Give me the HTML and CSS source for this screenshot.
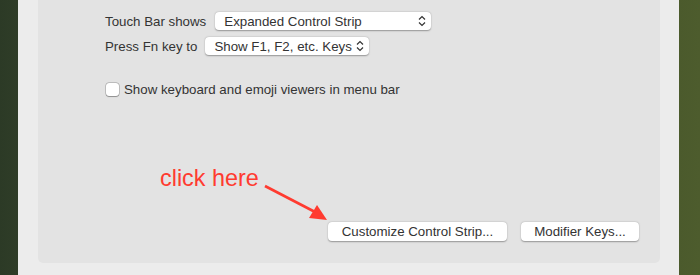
FILE: index.html
```html
<!DOCTYPE html>
<html lang="en">
    <head>
        <meta charset="UTF-8" />
        <title>Keyboard</title>
        <link rel="stylesheet" href="styles.css">
    </head>
    <body>
        <div class="desktop">
            <div class="window">
                <div class="panel">
                    <div class="row">
                        <span class="label">Touch Bar shows</span>
                        <span class="popup popup-wide">Expanded Control Strip
                            <svg class="stepper" width="8" height="12" viewBox="0 0 8 12"><path d="M1 4.5 L4 1.5 L7 4.5 M1 7.5 L4 10.5 L7 7.5" fill="none" stroke="#333" stroke-width="1.2" /></svg>
                        </span>
                    </div>
                    <div class="row">
                        <span class="label">Press Fn key to</span>
                        <span class="popup popup-short">Show F1, F2, etc. Keys
                            <svg class="stepper" width="8" height="12" viewBox="0 0 8 12"><path d="M1 4.5 L4 1.5 L7 4.5 M1 7.5 L4 10.5 L7 7.5" fill="none" stroke="#333" stroke-width="1.2" /></svg>
                        </span>
                    </div>
                    <label class="check-row">
                        <span class="checkbox"></span>
                        Show keyboard and emoji viewers in menu bar
                    </label>
                    <div class="buttons">
                        <button class="mac-button btn-customize">Customize Control Strip...</button>
                        <button class="mac-button btn-modifier">Modifier Keys...</button>
                    </div>
                    <div class="annotation">click here</div>
                    <svg class="arrow" width="80" height="50" viewBox="0 0 80 50">
                        <line x1="2" y1="2" x2="54" y2="29" stroke="#ff3b30" stroke-width="2.6" />
                        <polygon points="64,36 46,34 54,21" fill="#ff3b30" />
                    </svg>
                </div>
            </div>
        </div>
    </body>
</html>
```
FILE: styles.css
```css
* {
    box-sizing: border-box;
}
body {
    margin: 0;
    background: linear-gradient(90deg, #2c3a26 0, #2f3d28 18px, #4b5a2c 679px, #4d5c2d 100%);
    font-family: "Liberation Sans", Arial, Helvetica, sans-serif;
    color: #333;
}
.desktop {
    height: 275px;
    padding-left: 18px;
    overflow: hidden;
}
.window {
    width: 661px;
    height: 275px;
    background-color: #ececec;
    padding: 0 19px 12px 20px;
}
.panel {
    position: relative;
    height: 263px;
    background-color: #e3e3e3;
    border-radius: 0 0 5px 5px;
    padding: 12px 0 0 67px;
    font-size: 13.3px;
}
.row {
    display: flex;
    align-items: center;
    height: 18px;
    margin-bottom: 7px;
}
.label {
    margin-right: 9px;
}
.popup {
    position: relative;
    display: inline-flex;
    align-items: center;
    height: 18px;
    padding-left: 9px;
    background-color: #fff;
    border-radius: 4px;
    box-shadow: 0 0.5px 1.5px rgba(0, 0, 0, 0.35);
}
.popup-wide {
    width: 216px;
}
.popup-short {
    width: 164px;
    margin-left: -1px;
}
.stepper {
    position: absolute;
    right: 5px;
    top: 3px;
}
.check-row {
    display: flex;
    align-items: center;
    margin-top: 27px;
    margin-left: 1px;
}
.checkbox {
    width: 13px;
    height: 13px;
    margin-right: 5px;
    background-color: #fff;
    border-radius: 3px;
    box-shadow: 0 0 0 0.5px rgba(0, 0, 0, 0.3), 0 0.5px 1px rgba(0, 0, 0, 0.25);
}
.buttons {
    display: flex;
    gap: 14px;
    margin-top: 125px;
    margin-left: 223px;
}
.mac-button {
    height: 19px;
    padding: 0;
    border: 0;
    background-color: #fff;
    border-radius: 4px;
    box-shadow: 0 0.5px 1.5px rgba(0, 0, 0, 0.35);
    font-family: "Liberation Sans", Arial, Helvetica, sans-serif;
    font-size: 13.3px;
    color: #333;
}
.btn-customize {
    width: 179px;
}
.btn-modifier {
    width: 118px;
}
.annotation {
    position: absolute;
    left: 122px;
    top: 165px;
    font-size: 23.4px;
    color: #ff3b30;
}
.arrow {
    position: absolute;
    left: 225px;
    top: 184px;
}
```
